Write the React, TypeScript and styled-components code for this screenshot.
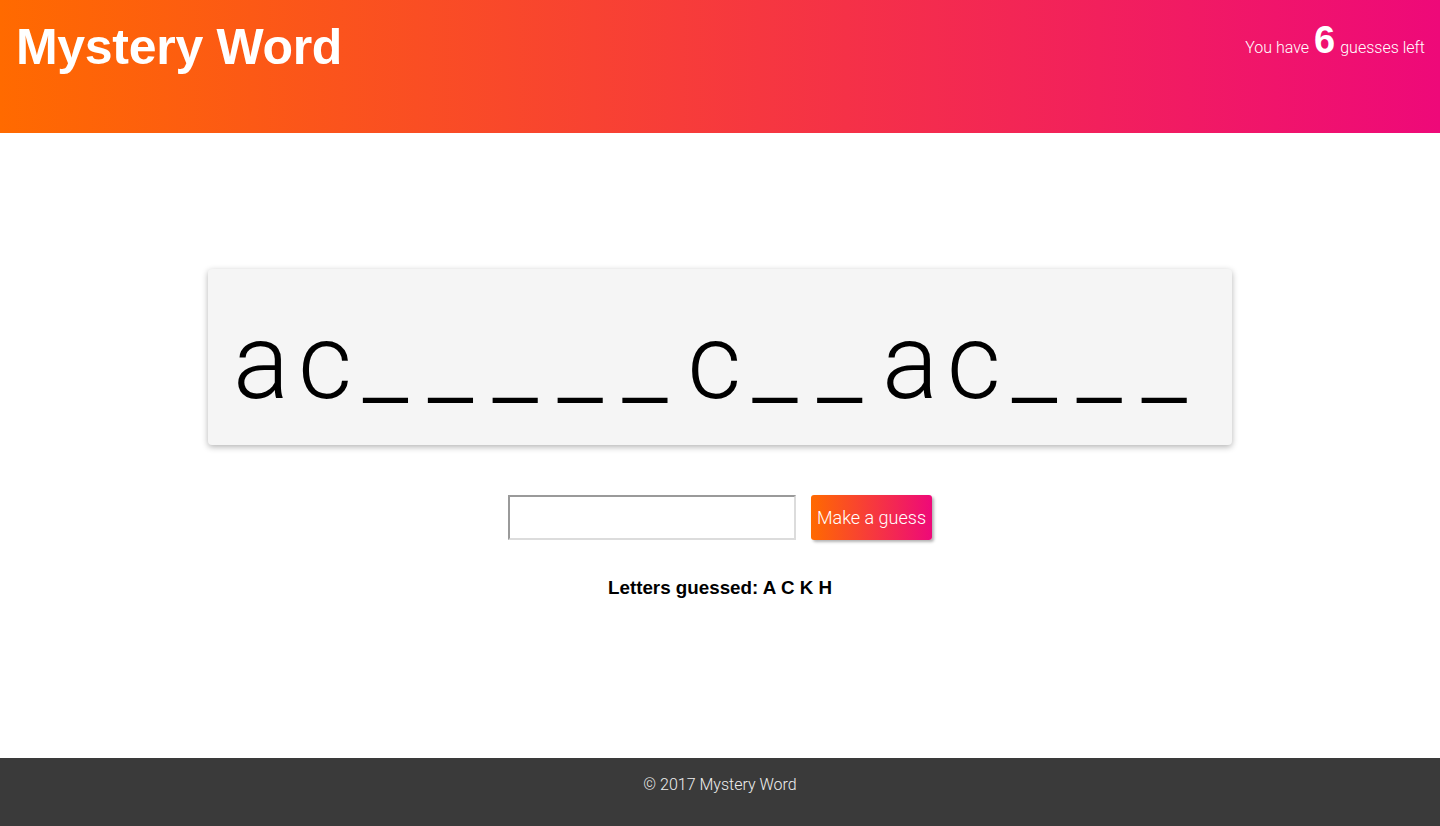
import styled, { createGlobalStyle } from 'styled-components';

const GlobalStyle = createGlobalStyle`
  html, body {
    margin: 0;
    padding: 0;
  }

  body {
    font-family: 'Liberation Sans', Arial, sans-serif;
    color: #000;
    background: #fff;
  }
`;

const word = 'ac_____c__ac___';
const guessed = ['A', 'C', 'K', 'H'];

export default function App() {
  return (
    <>
      <GlobalStyle />
      <Page>
        <Header>
          <Title>Mystery Word</Title>
          <Remaining>
            You have <Count>6</Count> guesses left
          </Remaining>
        </Header>

        <Main>
          <WordCard>
            <Word>
              {word.split('').map((ch, i) => (
                <Letter key={i}>{ch}</Letter>
              ))}
            </Word>
          </WordCard>

          <GuessForm onSubmit={(e) => e.preventDefault()}>
            <GuessInput type="text" />
            <GuessButton type="submit">Make a guess</GuessButton>
          </GuessForm>

          <Guessed>Letters guessed: {guessed.join(' ')}</Guessed>
        </Main>

        <Footer>© 2017 Mystery Word</Footer>
      </Page>
    </>
  );
}

const Page = styled.div`
  min-height: 100vh;
  display: flex;
  flex-direction: column;
`;

const Header = styled.header`
  height: 133px;
  padding: 0 15px 0 16px;
  box-sizing: border-box;

  display: flex;
  justify-content: space-between;
  align-items: flex-start;

  background: linear-gradient(to right, #ff6a00, #ee0979);
  color: #fff;
`;

const Title = styled.h1`
  margin: 22px 0 0;
  font-size: 50px;
  font-weight: 700;
  line-height: 50px;
  letter-spacing: -0.3px;
`;

const Remaining = styled.div`
  margin-top: 19px;
  display: flex;
  align-items: baseline;
  gap: 5px;

  font-family: Roboto, 'Liberation Sans', sans-serif;
  font-size: 16px;
  font-weight: 300;
`;

const Count = styled.span`
  font-family: 'Liberation Sans', Arial, sans-serif;
  font-size: 38px;
  font-weight: 700;
`;

const Main = styled.main`
  flex: 1;
  padding-top: 136px;

  display: flex;
  flex-direction: column;
  align-items: center;
`;

const WordCard = styled.div`
  width: 1024px;
  height: 176px;
  padding: 0 25px;
  box-sizing: border-box;

  display: flex;
  align-items: center;

  background: #f5f5f5;
  border-radius: 4px;
  box-shadow: 0 2px 6px rgba(0, 0, 0, 0.3);
`;

const Word = styled.div`
  margin-top: 10px;
  display: flex;

  font-family: Roboto, 'Liberation Sans', sans-serif;
  font-size: 105px;
  font-weight: 300;
  line-height: 1;
`;

const Letter = styled.span`
  width: 64.9px;
  flex: none;
`;

const GuessForm = styled.form`
  margin-top: 50px;
  display: flex;
  align-items: center;
  gap: 15px;
`;

const GuessInput = styled.input`
  width: 288px;
  height: 45px;
  box-sizing: border-box;
  padding: 0 8px;

  border: 2px solid;
  border-color: #9a9a9a #dcdcdc #dcdcdc #9a9a9a;
  font-size: 18px;
  outline: none;
`;

const GuessButton = styled.button`
  width: 121px;
  height: 45px;
  padding: 0;

  border: none;
  border-radius: 3px;
  background: linear-gradient(to right, #ff6a00, #ee0979);
  box-shadow: 2px 2px 3px rgba(0, 0, 0, 0.3);

  color: #fff;
  font-family: Roboto, 'Liberation Sans', sans-serif;
  font-size: 18px;
  font-weight: 300;
  cursor: pointer;
`;

const Guessed = styled.p`
  margin: 37px 0 0;
  font-size: 18.8px;
  font-weight: 700;
`;

const Footer = styled.footer`
  height: 68px;
  padding-top: 17px;
  box-sizing: border-box;

  background: #3a3a3a;
  color: #eee;
  text-align: center;

  font-family: Roboto, 'Liberation Sans', sans-serif;
  font-size: 16px;
  font-weight: 300;
`;
